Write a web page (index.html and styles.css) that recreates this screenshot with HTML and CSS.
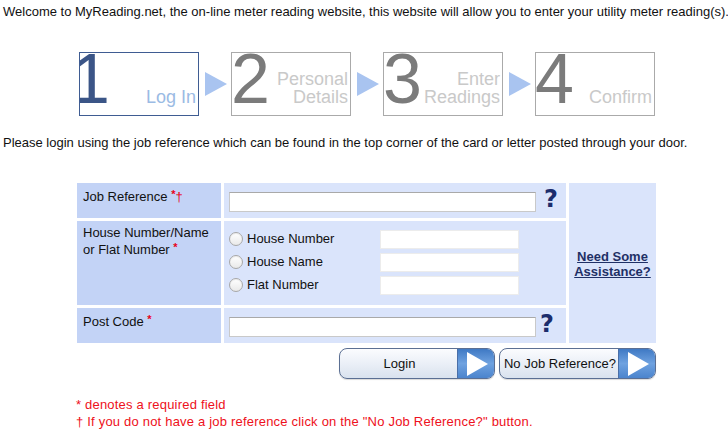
FILE: index.html
```html
<!DOCTYPE html>
<html lang="en">

<head>
    <meta charset="UTF-8">
    <meta name="viewport" content="width=device-width, initial-scale=1.0">
    <title>MyReading.net - Log In</title>
    <link rel="stylesheet" href="styles.css">
</head>

<body>
    <p class="intro">Welcome to MyReading.net, the on-line meter reading website, this website will allow you to enter your utility meter reading(s).</p>

    <!-- progress steps -->
    <div class="steps">
        <div class="step active">
            <span class="step-num num-1">1</span>
            <span class="step-label">Log In</span>
        </div>
        <span class="step-arrow"></span>
        <div class="step">
            <span class="step-num">2</span>
            <span class="step-label">Personal<br>Details</span>
        </div>
        <span class="step-arrow"></span>
        <div class="step">
            <span class="step-num">3</span>
            <span class="step-label">Enter<br>Readings</span>
        </div>
        <span class="step-arrow"></span>
        <div class="step">
            <span class="step-num">4</span>
            <span class="step-label">Confirm</span>
        </div>
    </div>

    <p class="instruction">Please login using the job reference which can be found in the top corner of the card or letter posted through your door.</p>

    <form class="login-form" id="loginForm">
        <div class="form-grid">
            <label class="cell-label" for="jobRef">Job Reference <span class="req">*</span><span class="dagger">&dagger;</span></label>
            <div class="cell-field">
                <input type="text" id="jobRef" class="text-input wide">
                <span class="help">?</span>
            </div>

            <div class="cell-assist">
                <a href="#" class="assist-link">Need Some<br>Assistance?</a>
            </div>

            <div class="cell-label">House Number/Name<br>or Flat Number <span class="req">*</span></div>
            <div class="cell-field house">
                <label class="radio-row"><input type="radio" name="houseType" value="number"> House Number</label>
                <input type="text" class="text-input small">
                <label class="radio-row"><input type="radio" name="houseType" value="name"> House Name</label>
                <input type="text" class="text-input small">
                <label class="radio-row"><input type="radio" name="houseType" value="flat"> Flat Number</label>
                <input type="text" class="text-input small">
            </div>

            <label class="cell-label" for="postCode">Post Code <span class="req">*</span></label>
            <div class="cell-field postcode">
                <input type="text" id="postCode" class="text-input wide">
                <span class="help">?</span>
            </div>
        </div>

        <div class="actions">
            <button type="submit" class="go-button"><span class="go-text">Login</span><span class="go-arrow"></span></button>
            <button type="button" class="go-button"><span class="go-text">No Job Reference?</span><span class="go-arrow"></span></button>
        </div>
    </form>

    <div class="notes">
        <p>* denotes a required field</p>
        <p>&dagger; If you do not have a job reference click on the "No Job Reference?" button.</p>
    </div>
</body>

</html>
```

FILE: styles.css
```css
* {
    box-sizing: border-box;
    margin: 0;
    padding: 0;
}

body {
    font-family: "Liberation Sans", Arial, sans-serif;
    font-size: 13px;
    color: #111;
    background-color: #fff;
    padding: 4px 3px;
}

.intro,
.instruction {
    line-height: 16px;
    white-space: nowrap;
}

/* steps */
.steps {
    display: flex;
    align-items: center;
    margin: 32px 0 0 76px;
}

.step {
    display: flex;
    justify-content: space-between;
    align-items: flex-end;
    width: 120px;
    height: 64px;
    border: 1px solid #aaaaaa;
    overflow: hidden;
}

.step.active {
    border-color: #3f5c92;
}

.step-num {
    font-size: 70px;
    line-height: 62px;
    margin: -5px 0 0 -1px;
    align-self: flex-start;
    color: #7b7b7b;
}

.step.active .step-num {
    color: #3b5587;
}

.num-1 {
    margin-left: -9px !important;
}

.step-label {
    font-size: 18px;
    line-height: 18px;
    text-align: right;
    padding: 0 2px 9px 0;
    color: #c9c9c9;
}

.step.active .step-label {
    color: #9bbbe4;
}

.step-arrow {
    width: 0;
    height: 0;
    margin: 0 4px 0 6px;
    border-top: 12px solid transparent;
    border-bottom: 12px solid transparent;
    border-left: 22px solid #a9c4f0;
}

.instruction {
    margin-top: 19px;
}

/* form */
.login-form {
    width: 579px;
    margin: 32px 0 0 74px;
}

.form-grid {
    display: grid;
    grid-template-columns: 144px 342px 87px;
    grid-template-rows: 35px 84px 35px;
    gap: 3px;
}

.cell-label {
    background-color: #c3d3f6;
    padding: 4px 6px;
    line-height: 15px;
}

.cell-field {
    background-color: #dae4fb;
    display: flex;
    align-items: center;
    padding: 2px 5px 0;
}

.cell-assist {
    grid-column: 3;
    grid-row: 1 / 4;
    background-color: #dae4fb;
    display: flex;
    align-items: center;
    justify-content: center;
    text-align: center;
}

.assist-link {
    color: #1f3066;
    font-weight: bold;
    font-size: 13px;
    line-height: 15px;
    margin-top: 2px;
}

.req {
    color: #e8001a;
    font-size: 11px;
    font-weight: bold;
    vertical-align: 3px;
}

.dagger {
    color: #e8001a;
}

.text-input {
    height: 20px;
    border: 1px solid #c9c9c9;
    border-top-color: #a9a9a9;
    background-color: #fff;
    font: inherit;
}

.text-input.wide {
    width: 307px;
}

.help {
    font-family: "DejaVu Sans", Verdana, sans-serif;
    font-weight: bold;
    font-size: 24px;
    line-height: 24px;
    color: #1c2d6c;
    margin: -5px 0 0 8px;
}

.postcode .help {
    margin-left: 4px;
}

.cell-field.house {
    display: grid;
    grid-template-columns: 151px 139px;
    grid-auto-rows: 19px;
    row-gap: 4px;
    align-items: center;
    align-content: start;
    padding-top: 9px;
}

.text-input.small {
    height: 19px;
    border: 1px solid #ececec;
}

.radio-row {
    display: flex;
    align-items: center;
    gap: 4px;
    line-height: 15px;
    margin-top: -2px;
}

.radio-row input {
    appearance: none;
    width: 14px;
    height: 14px;
    border: 1px solid #a8a8a8;
    border-radius: 50%;
    background: linear-gradient(#ffffff, #e9e9e9);
    box-shadow: inset 0 1px 1px rgba(0, 0, 0, 0.08);
}

/* buttons */
.actions {
    display: flex;
    justify-content: flex-end;
    gap: 4px;
    margin-top: 5px;
}

.go-button {
    display: flex;
    width: 156px;
    height: 31px;
    border: 1px solid #5b6f93;
    border-radius: 8px;
    overflow: hidden;
    background: linear-gradient(#fbfcfe, #e9eef6 55%, #d9e2ee);
    font-family: "Liberation Sans", Arial, sans-serif;
    font-size: 13px;
    color: #111;
    cursor: pointer;
    box-shadow: 0 1px 1px rgba(0, 0, 0, 0.15);
}

.go-button + .go-button {
    width: 157px;
}

.go-text {
    flex-grow: 1;
    align-self: center;
    padding-left: 2px;
}

.go-arrow {
    width: 37px;
    height: 100%;
    border-left: 1px solid #4a6fa8;
    background: linear-gradient(#3f79c4, #6fa2e0 50%, #4b84cd);
    display: flex;
    align-items: center;
    justify-content: center;
}

.go-arrow::after {
    content: "";
    width: 0;
    height: 0;
    margin-left: 3px;
    border-top: 12px solid transparent;
    border-bottom: 12px solid transparent;
    border-left: 21px solid #fff;
}

/* notes */
.notes {
    margin: 17px 0 0 73px;
    font-size: 13px;
    letter-spacing: 0.2px;
    line-height: 17px;
    color: #ee1020;
}
```
